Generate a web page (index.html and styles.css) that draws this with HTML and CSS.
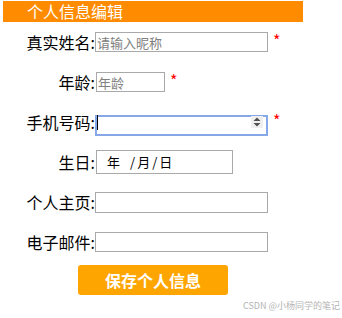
FILE: index.html
```html
<!DOCTYPE html>
<html lang="zh-CN">
<head>
<meta charset="utf-8">
<title>个人信息编辑</title>
<link rel="stylesheet" href="styles.css">
</head>
<body>
<div class="header"><span class="title">个人信息编辑</span></div>
<form class="form">
  <div class="row">
    <label class="label">真实姓名:</label>
    <input class="field field-wide" type="text" placeholder="请输入昵称">
    <span class="req">*</span>
  </div>
  <div class="row">
    <label class="label">年龄:</label>
    <input class="field field-age" type="text" placeholder="年龄">
    <span class="req">*</span>
  </div>
  <div class="row">
    <label class="label">手机号码:</label>
    <div class="phone-wrap">
      <input class="field field-wide field-focus" type="text">
      <span class="caret"></span>
      <span class="spinner">
        <svg width="12" height="12" viewBox="0 0 12 12"><path d="M2.5 5 L6 1.5 L9.5 5 Z" fill="#505050"/><path d="M2.5 7 L6 10.5 L9.5 7 Z" fill="#505050"/></svg>
      </span>
    </div>
    <span class="req">*</span>
  </div>
  <div class="row">
    <label class="label">生日:</label>
    <div class="field field-date"><span>年</span><span class="sep">/</span><span>月</span><span class="sep2">/</span><span>日</span></div>
  </div>
  <div class="row">
    <label class="label">个人主页:</label>
    <input class="field field-wide field-tall" type="text">
  </div>
  <div class="row">
    <label class="label">电子邮件:</label>
    <input class="field field-wide" type="text">
  </div>
  <div class="actions">
    <button class="save" type="button">保存个人信息</button>
  </div>
</form>
<div class="watermark">CSDN @小杨同学的笔记</div>
</body>
</html>
```
FILE: styles.css
```css
html, body {
  margin: 0;
  padding: 0;
  background: #fff;
}
body {
  font-family: "Noto Sans CJK SC", "Noto Sans", "Liberation Sans", sans-serif;
  color: #000;
  position: relative;
  width: 342px;
  height: 318px;
}
.header {
  margin: 1px 0 0 3px;
  width: 300px;
  height: 21px;
  background: #ff8c00;
  box-sizing: border-box;
  padding-left: 24px;
}
.title {
  color: #fff;
  font-size: 16px;
  line-height: 21px;
  display: block;
}
.form {
  display: flex;
  flex-direction: column;
  margin: 0;
}
.row {
  display: flex;
  align-items: center;
  height: 40px;
}
.label {
  width: 95px;
  text-align: right;
  font-size: 16px;
  line-height: 20px;
  flex: none;
}
.field {
  box-sizing: border-box;
  height: 20px;
  border: 1px solid #a9a9a9;
  padding: 0 1px;
  margin: 0;
  font-family: "Noto Sans CJK SC", sans-serif;
  font-size: 13px;
  line-height: 18px;
  color: #000;
  background: #fff;
  outline: none;
  flex: none;
}
.field::placeholder {
  color: #808080;
}
.field-wide {
  width: 173px;
}
.field-tall {
  height: 21px;
}
.field-age {
  width: 69px;
  margin-left: 1px;
}
.field-focus {
  border: 2px solid #86a8e8;
  height: 21px;
}
.phone-wrap {
  position: relative;
  height: 21px;
}
.caret {
  position: absolute;
  left: 2px;
  top: 3px;
  width: 1px;
  height: 15px;
  background: #000;
}
.spinner {
  position: absolute;
  left: 156px;
  top: 4px;
  width: 12px;
  height: 12px;
  background: #efefef;
  display: flex;
}
.req {
  color: #f00;
  font-size: 16px;
  line-height: 20px;
  margin-left: 5px;
  align-self: center;
  position: relative;
  top: -2px;
}
.field-date {
  width: 137px;
  height: 24px;
  margin-left: 1px;
  display: flex;
  align-items: center;
  padding-left: 10px;
  font-size: 13px;
}
.sep {
  margin-left: 10px;
  margin-right: 2px;
}
.sep2 {
  margin: 0 2px;
}
.actions {
  padding-left: 78px;
  padding-top: 3px;
}
.save {
  width: 150px;
  height: 30px;
  border: none;
  border-radius: 3px;
  background: #ffa500;
  color: #fff;
  font-family: "Noto Sans CJK SC", sans-serif;
  font-size: 16px;
  font-weight: bold;
  padding: 0;
  margin: 0;
  display: block;
}
.watermark {
  position: absolute;
  left: 243px;
  top: 299px;
  font-size: 9px;
  line-height: 13px;
  color: #b4b4b4;
  white-space: nowrap;
}
```
